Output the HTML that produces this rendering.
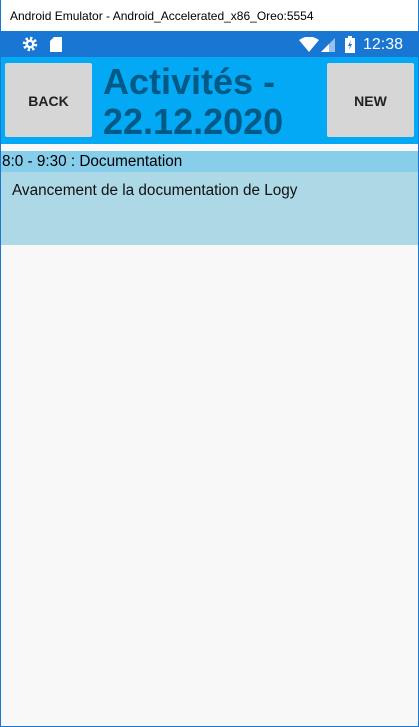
<!DOCTYPE html>
<html><head><meta charset="utf-8"><style>
*{margin:0;padding:0;box-sizing:border-box}
body{width:419px;height:727px;overflow:hidden;background:#1976d2;font-family:"Liberation Sans",sans-serif;position:relative}
.win{position:absolute;left:1px;top:0;width:417px;height:726px;background:#f8f8f8}
.title{position:absolute;left:0;top:0;width:417px;height:31px;background:#fff;font-size:12px;color:#000;padding:9px 0 0 9px}
.status{position:absolute;left:0;top:31px;width:417px;height:26px;background:#1976d2;color:#fff}
.hdr{position:absolute;left:0;top:57px;width:417px;height:87px;background:#03a9f4}
.btn{position:absolute;top:6px;width:87px;height:74px;background:#d6d6d6;border-radius:2px;font-size:14px;font-weight:bold;color:#222;text-align:center;line-height:76px}
.h{position:absolute;left:102px;top:5px;font-size:36px;font-weight:bold;color:#005a85;line-height:40px}
.row1{position:absolute;left:0;top:151px;width:417px;height:21px;background:#87ceeb;font-size:15.3px;padding:2px 0 0 1px;color:#000}
.row2{position:absolute;left:0;top:172px;width:417px;height:73px;background:#add8e6;font-size:15.3px;padding:10px 0 0 11px;color:#111}
</style></head><body><div class="win">
<div class="title">Android Emulator - Android_Accelerated_x86_Oreo:5554</div>
<div class="status">
<svg style="position:absolute;left:21px;top:5px" width="16" height="16" viewBox="0 0 16 16"><circle cx="8" cy="8" r="5.5" fill="none" stroke="#fff" stroke-width="3.5" stroke-dasharray="2.2 2.1"/><circle cx="8" cy="8" r="4.5" fill="#fff"/><circle cx="8" cy="8" r="2" fill="#1976d2"/></svg>
<svg style="position:absolute;left:49px;top:6px" width="12" height="15"><path d="M4 0H12V15H0V4Z" fill="#fff"/></svg>
<svg style="position:absolute;left:298px;top:6px" width="20" height="15"><path d="M0 3Q10-4 20 3L10 15Z" fill="#fff"/></svg>
<svg style="position:absolute;left:320px;top:7px" width="14" height="14"><path d="M14 0V14H0Z" fill="#fff" opacity=".55"/><path d="M8 6V14H0Z" fill="#fff"/></svg>
<svg style="position:absolute;left:344px;top:5px" width="10" height="17"><path d="M3 0H7V2H10V17H0V2H3Z" fill="#fff"/><path d="M6 4L3 10H5L4 14L7 8H5Z" fill="#1976d2"/></svg>
<span style="position:absolute;left:362px;top:5px;font-size:16px">12:38</span>
</div>
<div class="hdr">
<div class="btn" style="left:4px">BACK</div>
<div class="h">Activités -<br>22.12.2020</div>
<div class="btn" style="left:326px">NEW</div>
</div>
<div class="row1">8:0 - 9:30 : Documentation</div>
<div class="row2">Avancement de la documentation de Logy</div>
</div></body></html>
